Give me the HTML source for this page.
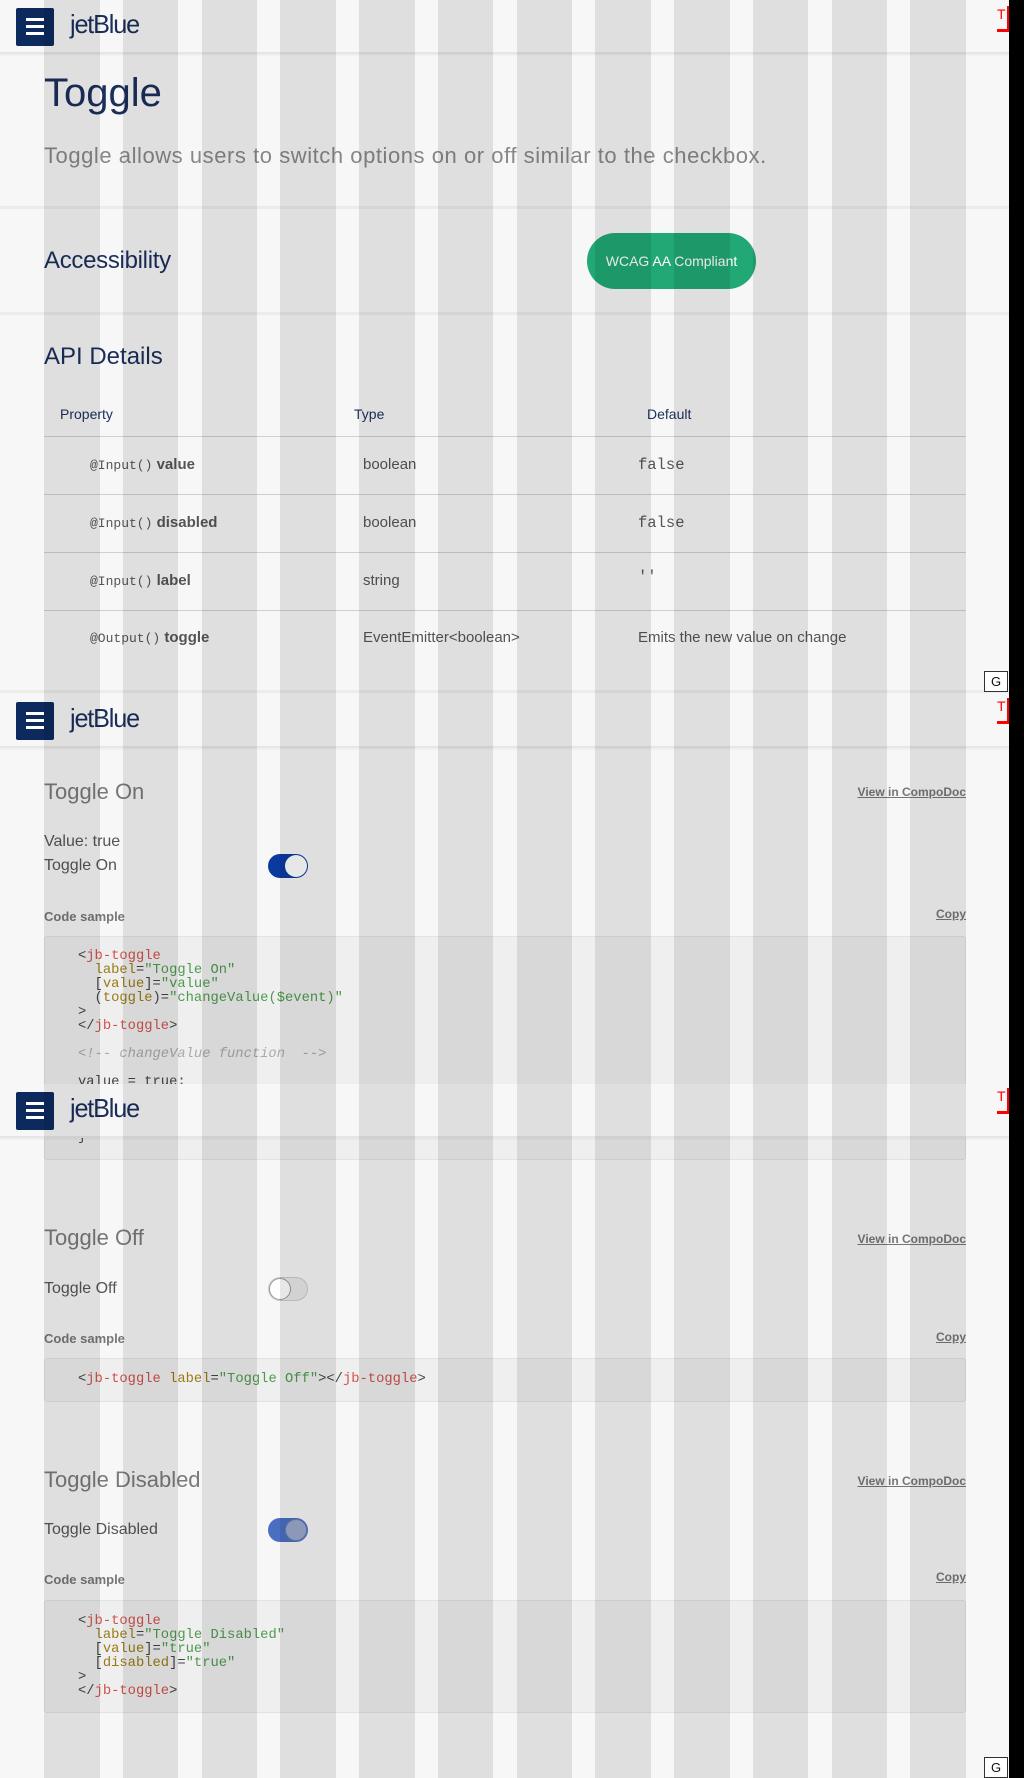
<!DOCTYPE html>
<html><head><meta charset="utf-8">
<style>
*{margin:0;padding:0;box-sizing:border-box}
body{width:1024px;height:1778px;background:#f7f7f7;position:relative;overflow:hidden;font-family:"Liberation Sans",sans-serif}
.a{position:absolute;white-space:nowrap}
.hdr{position:absolute;left:0;width:1009px;height:54px;background:#f7f7f7;border-bottom:2px solid #e6e6e6;box-shadow:0 1px 2px rgba(0,0,0,.06)}
.ham{position:absolute;left:16px;top:8px;width:38px;height:38px;background:#0d2a5e;border-radius:2px}
.ham i{position:absolute;left:10px;width:18px;height:3px;background:#fff}
.logo{position:absolute;left:70px;top:9px;font-size:26px;color:#1b2f5b;letter-spacing:-1.2px;transform:scaleX(.97);transform-origin:left}
.tm{position:absolute;left:997px;width:12px;height:26px;border-right:2px solid red;border-bottom:3px solid red;color:red;font-size:14px;line-height:16px}
.g{position:absolute;left:984px;width:24px;height:21px;border:1px solid #333;background:#fff;font-size:13px;text-align:center;line-height:19px;color:#111}
.line{position:absolute;left:0;width:1009px;height:3px;background:#ececec}
.tl{position:absolute;left:44px;width:922px;height:1px;background:#cfcfcf}
.h2{font-size:24px;color:#1b2f5b;line-height:30px}
.sec{font-size:22px;color:#7a7a7a;line-height:28px}
.lnk{font-size:12px;color:#777;text-decoration:underline;font-weight:bold;line-height:16px;right:58px}
.lbl{font-size:16px;color:#555;line-height:20px;left:44px}
.cs{font-size:13px;color:#777;font-weight:bold;line-height:16px;left:44px}
.code{position:absolute;left:44px;width:922px;background:#efefef;border:1px solid #e2e2e2;border-radius:3px}
pre{position:absolute;left:78px;font-family:"Liberation Mono",monospace;font-size:13.8px;line-height:14px;color:#444}
.t{color:#d0524a}.at{color:#9a7a14}.s{color:#4e9a4e}.c{color:#aaa;font-style:italic}
.sw{position:absolute;left:268px;width:40px;height:24px;border-radius:12px}
.kn{position:absolute;top:1px;width:22px;height:22px;border-radius:50%;background:#fff}
.th{font-size:14px;color:#1b2f5b;line-height:18px}
.td{font-size:15px;color:#555;line-height:20px}
.mono{font-family:"Liberation Mono",monospace;font-size:13px}
.mono2{font-family:"Liberation Mono",monospace;font-size:15.5px}
.stripes{position:absolute;left:0;top:0;width:1024px;height:1778px;pointer-events:none}
.stripes i{position:absolute;top:0;width:55.5px;height:1778px;background:rgba(0,0,0,.095)}
</style></head><body>

<div class="hdr" style="top:0"><div class="ham"><i style="top:10px"></i><i style="top:17px"></i><i style="top:24px"></i></div><div class="logo">jetBlue</div></div>

<div class="a" style="left:44px;top:68px;font-size:40px;color:#1b2f5b;line-height:50px">Toggle</div>
<div class="a" style="left:44px;top:142px;font-size:22px;color:#888;line-height:28px;letter-spacing:.55px">Toggle allows users to switch options on or off similar to the checkbox.</div>
<div class="line" style="top:206px"></div>
<div class="a h2" style="left:44px;top:246px;letter-spacing:-.3px">Accessibility</div>
<div class="a" style="left:587px;top:233px;width:169px;height:56px;border-radius:28px;background:#21a874;color:#fff;font-size:14px;line-height:56px;text-align:center">WCAG AA Compliant</div>
<div class="line" style="top:312px"></div>
<div class="a h2" style="left:44px;top:342px">API Details</div>

<div class="a th" style="left:60px;top:405px">Property</div>
<div class="a th" style="left:354px;top:405px">Type</div>
<div class="a th" style="left:647px;top:405px">Default</div>
<div class="tl" style="top:436px"></div>
<div class="a td" style="left:90px;top:455px"><span class="mono">@Input()</span> <b>value</b></div>
<div class="a td" style="left:363px;top:455px">boolean</div>
<div class="a td mono2" style="left:638px;top:455px">false</div>
<div class="tl" style="top:494px"></div>
<div class="a td" style="left:90px;top:513px"><span class="mono">@Input()</span> <b>disabled</b></div>
<div class="a td" style="left:363px;top:513px">boolean</div>
<div class="a td mono2" style="left:638px;top:513px">false</div>
<div class="tl" style="top:552px"></div>
<div class="a td" style="left:90px;top:571px"><span class="mono">@Input()</span> <b>label</b></div>
<div class="a td" style="left:363px;top:571px">string</div>
<div class="a td mono2" style="left:638px;top:567px">''</div>
<div class="tl" style="top:610px"></div>
<div class="a td" style="left:90px;top:628px"><span class="mono">@Output()</span> <b>toggle</b></div>
<div class="a td" style="left:363px;top:628px">EventEmitter&lt;boolean&gt;</div>
<div class="a td" style="left:638px;top:628px">Emits the new value on change</div>
<div class="line" style="top:690px"></div>

<div class="a sec" style="left:44px;top:778px">Toggle On</div>
<div class="a lnk" style="top:784px">View in CompoDoc</div>
<div class="a lbl" style="top:832px">Value: true</div>
<div class="a lbl" style="top:856px">Toggle On</div>
<div class="sw" style="top:854px;background:#0b3a9e"><div class="kn" style="left:17px"></div></div>
<div class="a cs" style="top:909px">Code sample</div>
<div class="a lnk" style="top:906px">Copy</div>
<div class="code" style="top:936px;height:224px"></div>
<pre style="top:950px">&lt;<span class="t">jb-toggle</span>
  <span class="at">label</span>=<span class="s">"Toggle On"</span>
  [<span class="at">value</span>]=<span class="s">"value"</span>
  (<span class="at">toggle</span>)=<span class="s">"changeValue($event)"</span>
&gt;
&lt;/<span class="t">jb-toggle</span>&gt;

<span class="c">&lt;!-- changeValue function  --&gt;</span>

value = true;
</pre>
<pre style="top:1131px">}</pre>

<div class="a sec" style="left:44px;top:1224px">Toggle Off</div>
<div class="a lnk" style="top:1231px">View in CompoDoc</div>
<div class="a lbl" style="top:1279px">Toggle Off</div>
<div class="sw" style="top:1277px;background:#e8e8e8;border:1px solid #ccc"><div class="kn" style="left:0;top:0;border:1px solid #999"></div></div>
<div class="a cs" style="top:1331px">Code sample</div>
<div class="a lnk" style="top:1329px">Copy</div>
<div class="code" style="top:1358px;height:44px"></div>
<pre style="top:1373px">&lt;<span class="t">jb-toggle</span> <span class="at">label</span>=<span class="s">"Toggle Off"</span>&gt;&lt;/<span class="t">jb-toggle</span>&gt;</pre>

<div class="a sec" style="left:44px;top:1466px">Toggle Disabled</div>
<div class="a lnk" style="top:1473px">View in CompoDoc</div>
<div class="a lbl" style="top:1520px">Toggle Disabled</div>
<div class="sw" style="top:1518px;background:#4a6fc0"><div class="kn" style="left:17px;background:#9aa8cc;border:1px solid #6a7fb5"></div></div>
<div class="a cs" style="top:1572px">Code sample</div>
<div class="a lnk" style="top:1569px">Copy</div>
<div class="code" style="top:1600px;height:113px"></div>
<pre style="top:1615px">&lt;<span class="t">jb-toggle</span>
  <span class="at">label</span>=<span class="s">"Toggle Disabled"</span>
  [<span class="at">value</span>]=<span class="s">"true"</span>
  [<span class="at">disabled</span>]=<span class="s">"true"</span>
&gt;
&lt;/<span class="t">jb-toggle</span>&gt;</pre>

<div class="hdr" style="top:694px"><div class="ham"><i style="top:10px"></i><i style="top:17px"></i><i style="top:24px"></i></div><div class="logo">jetBlue</div></div>
<div class="hdr" style="top:1084px"><div class="ham"><i style="top:10px"></i><i style="top:17px"></i><i style="top:24px"></i></div><div class="logo">jetBlue</div></div>

<div class="stripes">
<i style="left:44px"></i><i style="left:122.8px"></i><i style="left:201.5px"></i><i style="left:280.3px"></i><i style="left:359px"></i><i style="left:437.8px"></i><i style="left:516.5px"></i><i style="left:595.3px"></i><i style="left:674px"></i><i style="left:752.8px"></i><i style="left:831.5px"></i><i style="left:910.3px"></i>
</div>

<div class="tm" style="top:6px">T</div>
<div class="tm" style="top:698px">T</div>
<div class="tm" style="top:1088px">T</div>
<div class="g" style="top:671px">G</div>
<div class="g" style="top:1757px">G</div>
<div style="position:absolute;left:1009px;top:0;width:15px;height:1778px;background:#000"></div>
</body></html>
